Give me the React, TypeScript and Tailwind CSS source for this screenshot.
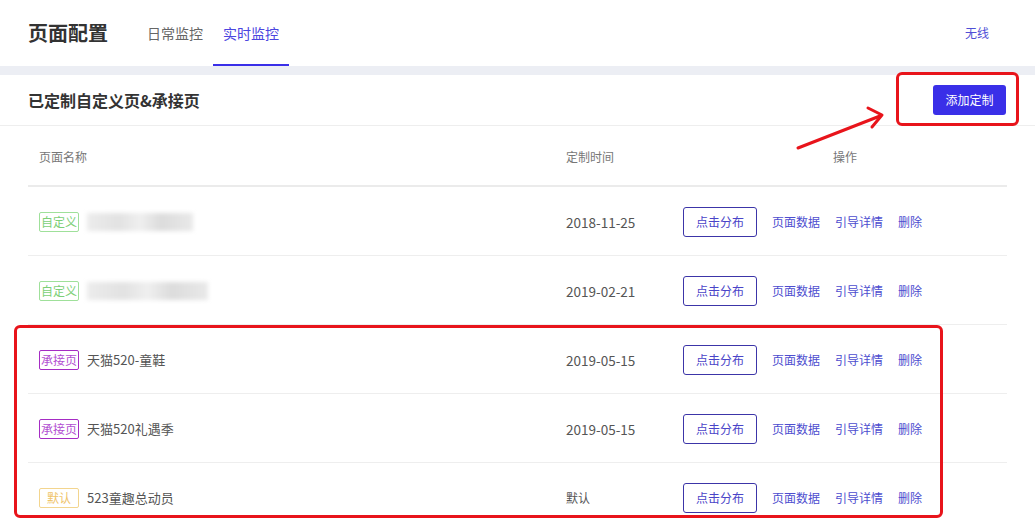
import React from "react";

type Row = {
  tag: "自定义" | "承接页" | "默认";
  name?: string;
  blur?: number;
  date: string;
};

const rows: Row[] = [
  { tag: "自定义", blur: 106, date: "2018-11-25" },
  { tag: "自定义", blur: 121, date: "2019-02-21" },
  { tag: "承接页", name: "天猫520-童鞋", date: "2019-05-15" },
  { tag: "承接页", name: "天猫520礼遇季", date: "2019-05-15" },
  { tag: "默认", name: "523童趣总动员", date: "默认" },
];

function Tag({ t }: { t: Row["tag"] }) {
  if (t === "自定义")
    return (
      <span className="inline-flex h-[20px] w-[40px] items-center justify-center rounded-[2px] border border-[#9fe09a] text-[12px] text-[#7ccf77]">
        自定义
      </span>
    );
  if (t === "承接页")
    return (
      <span className="inline-flex h-[20px] w-[40px] items-center justify-center rounded-[2px] border border-[#a52cc4] text-[12px] text-[#b24fd2]">
        承接页
      </span>
    );
  return (
    <span className="inline-flex h-[20px] w-[40px] items-center justify-center rounded-[2px] border border-[#f3d58e] text-[12px] text-[#efc46a]">
      默认
    </span>
  );
}

function Blurred({ w }: { w: number }) {
  return (
    <div className="relative h-[18px]" style={{ width: w }}>
      <div className="absolute inset-0 bg-[linear-gradient(90deg,#ececec,#e2e2e2_30%,#efefef_50%,#dcdcdc_70%,#e9e9e9)] blur-[2px]" />
    </div>
  );
}

export default function App() {
  return (
    <div
      className="relative h-[527px] w-[1035px] overflow-hidden bg-white"
      style={{ fontFamily: '"Noto Sans CJK SC", "Noto Sans", sans-serif' }}
    >
      {/* top header */}
      <div className="flex h-[66px] items-center justify-between pl-[28px] pr-[46px]">
        <div className="flex h-full items-center">
          <div className="text-[20px] font-bold leading-none text-[#333]">页面配置</div>
          <div className="ml-[29px] flex h-full">
            <div className="flex h-full items-center px-[10px] text-[14px] text-[#666]">日常监控</div>
            <div className="relative flex h-full items-center px-[10px] text-[14px] text-[#4b45e0]">
              实时监控
              <div className="absolute bottom-0 left-0 right-0 h-[2px] bg-[#3a2fe8]" />
            </div>
          </div>
        </div>
        <div className="text-[12px] text-[#4f4fd6]">无线</div>
      </div>

      <div className="h-[9px] bg-[#eceef4]" />

      {/* section header */}
      <div className="flex h-[51px] items-center justify-between border-b border-[#eeeeee] pl-[28px] pr-[29px]">
        <div className="text-[16px] font-bold text-[#333]">已定制自定义页&amp;承接页</div>
        <button className="h-[30px] w-[73px] rounded-[3px] bg-[#3a2fe8] text-[12px] text-white">添加定制</button>
      </div>

      {/* table */}
      <div className="px-[28px]">
        <div className="grid h-[61px] grid-cols-[538px_117px_1fr] items-center border-b-2 border-[#ebebeb] pt-[2px] text-[12px] text-[#777]">
          <div className="pl-[11px]">页面名称</div>
          <div>定制时间</div>
          <div className="text-center">操作</div>
        </div>
        {rows.map((r, i) => (
          <div
            key={i}
            className="grid h-[69px] grid-cols-[538px_117px_1fr] items-center border-b border-[#eeeeee] pt-[2px] text-[13px] text-[#555]"
          >
            <div className="flex items-center gap-[8px] pl-[11px]">
              <Tag t={r.tag} />
              {r.name ? <span>{r.name}</span> : <Blurred w={r.blur ?? 100} />}
            </div>
            <div className={r.date === "默认" ? "text-[12px]" : "text-[13.5px]"}>{r.date}</div>
            <div className="flex items-center gap-[15px] text-[12px] text-[#4d4dcf]">
              <button className="h-[30px] w-[74px] rounded-[3px] border border-[#3c35a8] text-[12px] text-[#4a44c8]">
                点击分布
              </button>
              <span>页面数据</span>
              <span>引导详情</span>
              <span>删除</span>
            </div>
          </div>
        ))}
      </div>

      {/* annotations */}
      <div className="absolute left-[896px] top-[72px] h-[54px] w-[123px] rounded-[6px] border-[3px] border-[#e8141b]" />
      <div className="absolute left-[14px] top-[325px] h-[193px] w-[929px] rounded-[6px] border-[3px] border-[#e8141b]" />
      <svg className="absolute left-0 top-0" width="1035" height="527" style={{ pointerEvents: "none" }}>
        <line x1="798" y1="148" x2="880" y2="116" stroke="#e8141b" strokeWidth="3" strokeLinecap="round" />
        <polyline points="868,108 882,115 872,127" fill="none" stroke="#e8141b" strokeWidth="3" strokeLinecap="round" strokeLinejoin="round" />
      </svg>
    </div>
  );
}
